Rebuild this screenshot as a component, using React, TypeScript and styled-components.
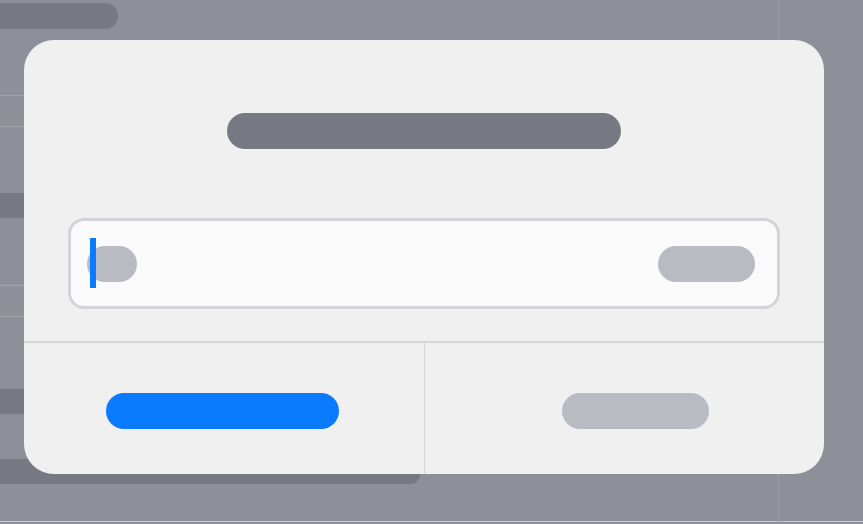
import React from "react";
import styled, { createGlobalStyle } from "styled-components";

const Global = createGlobalStyle`
  html, body { margin: 0; padding: 0; }
  body {
    width: 863px;
    height: 524px;
    overflow: hidden;
    background: #8e9099;
    font-family: "Liberation Sans", Arial, sans-serif;
  }
`;

const Backdrop = styled.div`
  position: relative;
  width: 863px;
  height: 524px;
  display: flex;
  background: #8e9099;
`;

const MainCol = styled.div`
  width: 778px;
  height: 521px;
  border-right: 1px solid #9a9ca3;
  border-bottom: 1px solid #c6c7cb;
  display: flex;
  flex-direction: column;
`;

const TopPill = styled.div`
  margin-top: 3px;
  width: 118px;
  height: 26px;
  background: #777982;
  border-radius: 0 13px 13px 0;
`;

const Rule = styled.div<{ $gap: number }>`
  margin-top: ${(p) => p.$gap}px;
  height: 1px;
  width: 100%;
  background: #a1a3a9;
`;

const Band = styled.div<{ $gap: number; $w?: number }>`
  margin-top: ${(p) => p.$gap}px;
  height: 25px;
  width: ${(p) => (p.$w ? `${p.$w}px` : "100%")};
  background: #777982;
  border-radius: ${(p) => (p.$w ? "0 0 9px 0" : "0")};
`;

const SideCol = styled.div`
  flex: 1;
  height: 521px;
  border-bottom: 1px solid #c6c7cb;
`;

const Dialog = styled.div`
  position: absolute;
  left: 24px;
  top: 40px;
  width: 800px;
  height: 434px;
  background: #f0f0f0;
  border-radius: 30px;
  overflow: hidden;
  display: flex;
  flex-direction: column;
`;

const Body = styled.div`
  padding: 73px 44px 32px;
  display: flex;
  flex-direction: column;
  align-items: center;
`;

const TitleBar = styled.div`
  width: 394px;
  height: 36px;
  border-radius: 18px;
  background: #777982;
`;

const Field = styled.div`
  position: relative;
  margin-top: 69px;
  box-sizing: border-box;
  width: 712px;
  height: 91px;
  border: 3px solid #d3d3d8;
  border-radius: 16px;
  background: #fafafa;
  display: flex;
  align-items: center;
  justify-content: space-between;
  padding: 0 22px 0 16px;
`;

const Pill = styled.div<{ $w: number }>`
  width: ${(p) => p.$w}px;
  height: 36px;
  border-radius: 18px;
  background: #b9bbc2;
`;

const Caret = styled.div`
  position: absolute;
  left: 19px;
  top: 17px;
  width: 6px;
  height: 50px;
  background: #0a7aff;
`;

const Actions = styled.div`
  flex: 1;
  display: grid;
  grid-template-columns: 400px 400px;
  border-top: 2px solid #d6d6da;
`;

const ActionCell = styled.div<{ $divider?: boolean; $shift: number }>`
  display: flex;
  align-items: center;
  justify-content: center;
  padding-top: 4px;
  padding-left: ${(p) => (p.$shift > 0 ? p.$shift : 0)}px;
  padding-right: ${(p) => (p.$shift < 0 ? -p.$shift : 0)}px;
  border-left: ${(p) => (p.$divider ? "1px solid #d6d6da" : "none")};
`;

const ActionPill = styled.div<{ $w: number; $primary?: boolean }>`
  width: ${(p) => p.$w}px;
  height: 36px;
  border-radius: 18px;
  background: ${(p) => (p.$primary ? "#0a7aff" : "#b9bbc2")};
`;

export default function App() {
  return (
    <>
      <Global />
      <Backdrop>
        <MainCol>
          <TopPill />
          <Rule $gap={66} />
          <Rule $gap={30} />
          <Band $gap={66} />
          <Rule $gap={67} />
          <Rule $gap={30} />
          <Band $gap={72} />
          <Band $gap={45} $w={420} />
        </MainCol>
        <SideCol />
        <Dialog>
          <Body>
            <TitleBar />
            <Field>
              <Pill $w={50} />
              <Pill $w={97} />
              <Caret />
            </Field>
          </Body>
          <Actions>
            <ActionCell $shift={-3}>
              <ActionPill $w={233} $primary />
            </ActionCell>
            <ActionCell $divider $shift={21}>
              <ActionPill $w={147} />
            </ActionCell>
          </Actions>
        </Dialog>
      </Backdrop>
    </>
  );
}
